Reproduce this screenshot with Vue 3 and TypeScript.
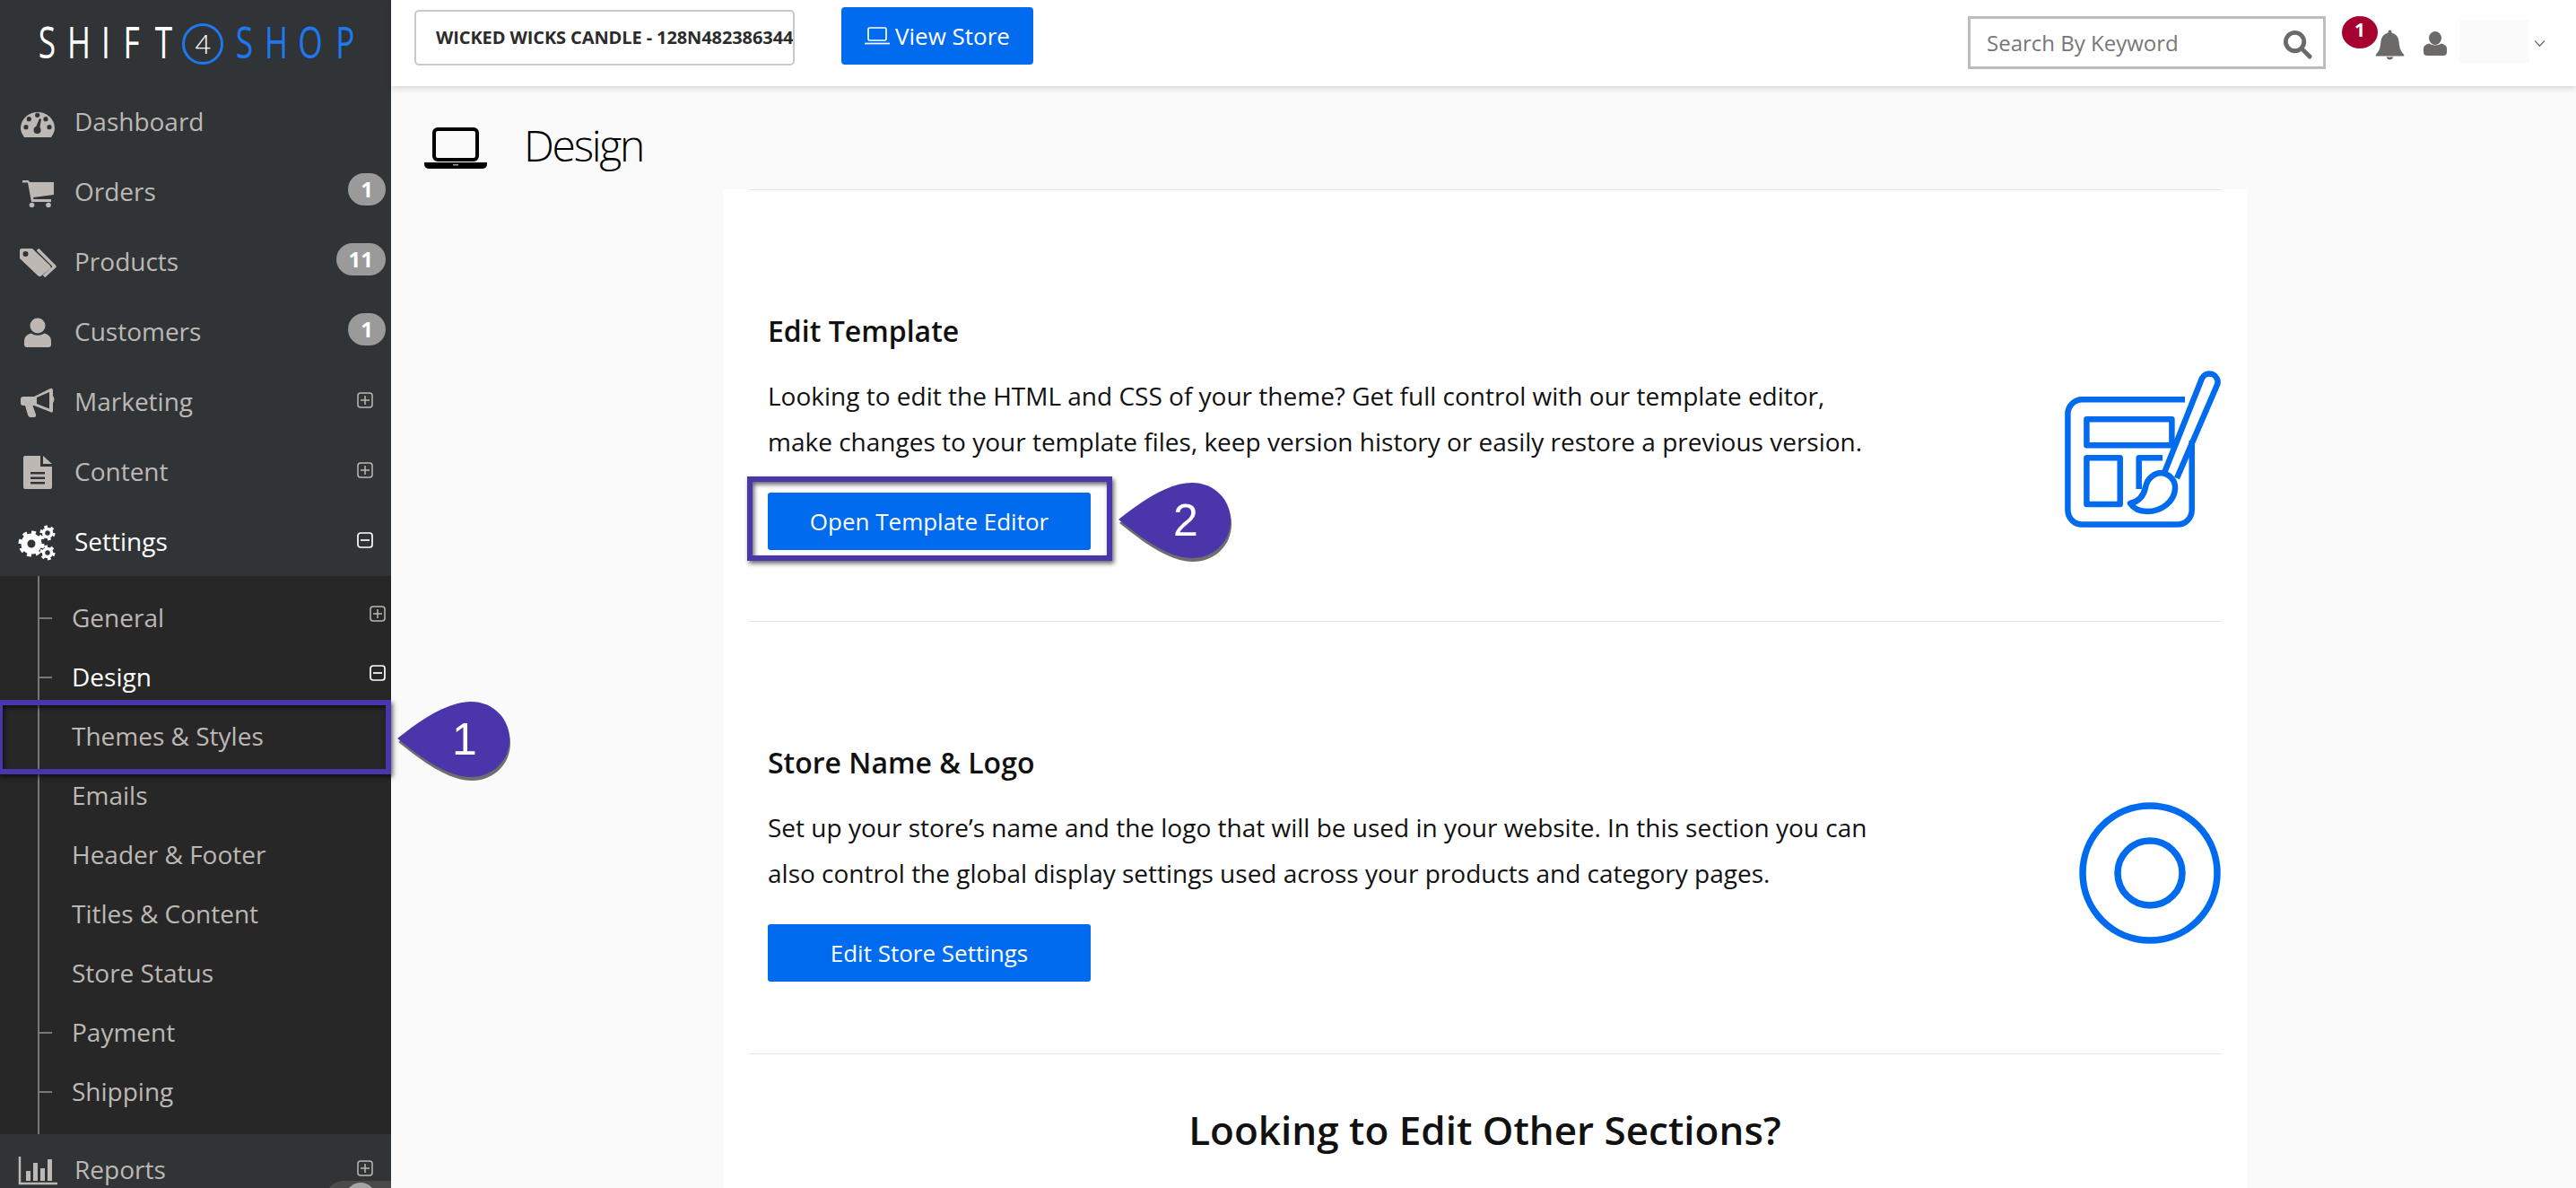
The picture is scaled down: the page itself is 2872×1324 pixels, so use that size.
<script setup lang="ts">
interface NavItem {
  label: string
  icon: string
  badge?: string
  toggle?: 'plus' | 'minus'
  active?: boolean
}
interface SubItem {
  label: string
  tick?: boolean
  toggle?: 'plus' | 'minus'
  active?: boolean
}
const topNav: NavItem[] = [
  { label: 'Dashboard', icon: 'gauge' },
  { label: 'Orders', icon: 'cart', badge: '1' },
  { label: 'Products', icon: 'tags', badge: '11' },
  { label: 'Customers', icon: 'user', badge: '1' },
  { label: 'Marketing', icon: 'horn', toggle: 'plus' },
  { label: 'Content', icon: 'file', toggle: 'plus' },
  { label: 'Settings', icon: 'gears', toggle: 'minus', active: true }
]
const subNav: SubItem[] = [
  { label: 'General', tick: true, toggle: 'plus' },
  { label: 'Design', tick: true, toggle: 'minus', active: true },
  { label: 'Themes & Styles' },
  { label: 'Emails' },
  { label: 'Header & Footer' },
  { label: 'Titles & Content' },
  { label: 'Store Status' },
  { label: 'Payment', tick: true },
  { label: 'Shipping', tick: true }
]
const bottomNav: NavItem[] = [{ label: 'Reports', icon: 'chart', toggle: 'plus' }]
const gearDots = [0, 1]
</script>

<template>
  <div class="page">
    <aside class="sidebar">
      <div class="brand">
        <span class="bl w35"><i>S</i></span>
        <span class="bl w36"><i>H</i></span>
        <span class="bl w24"><i>I</i></span>
        <span class="bl w34"><i>F</i></span>
        <span class="bl w36"><i>T</i></span>
        <span class="brand-four">4</span>
        <span class="bl blue w35 gap6"><i>S</i></span>
        <span class="bl blue w35"><i>H</i></span>
        <span class="bl blue w43"><i>O</i></span>
        <span class="bl blue w34"><i>P</i></span>
      </div>
      <nav>
        <div v-for="item in topNav" :key="item.label" class="nav-row" :class="{ active: item.active }">
          <svg class="nav-icon" viewBox="0 0 44 40" aria-hidden="true">
            <template v-if="item.icon === 'gauge'">
              <path d="M7 38C4.500 34 3 31 3 28A19 18 0 0 1 41 28C41 31 39.500 34 37 38Z" />
              <g class="cut">
                <circle cx="9" cy="26.700" r="2.600" /><circle cx="12.300" cy="17.700" r="2.600" /><circle cx="21.700" cy="13.300" r="2.600" /><circle cx="31" cy="17.700" r="2.600" /><circle cx="35" cy="26.700" r="2.600" /><circle cx="21.500" cy="30" r="4" /><path d="M24 17L26 18L24 29L19 29Z" />
              </g>
            </template>
            <template v-else-if="item.icon === 'cart'">
              <path d="M5 8H11Q12.500 8 13 10H40V24L17 27L17.500 29H37V32H15L11 10.500H5Z" />
              <circle cx="15.500" cy="35.500" r="2.800" /><circle cx="34" cy="35.500" r="2.800" />
            </template>
            <template v-else-if="item.icon === 'tags'">
              <path fill-rule="evenodd" d="M4 6H16L36 25Q37.500 27 36 28.500L26 36.500Q24 38 22 36L2 17V8Q2 6 4 6ZM8.500 9A3 3 0 1 0 8.500 15A3 3 0 1 0 8.500 9Z" />
              <path class="line" d="M22 7L41 26L29 37" />
            </template>
            <template v-else-if="item.icon === 'user'">
              <ellipse cx="22" cy="14" rx="8.500" ry="8.500" />
              <path d="M7 35V31Q7 24.500 14.500 22.500Q22 27 29.500 22.500Q37 24.500 37 31V35Q37 38 34 38H10Q7 38 7 35Z" />
            </template>
            <template v-else-if="item.icon === 'horn'">
              <path fill-rule="evenodd" d="M3 18Q3 15 6 15H18L36 6Q39 5 39 9V14Q42 18 39 22V31Q38.500 34 36 32L18 25H16.500L20 35Q20.500 38 18 38H14Q12 38 11 35.500L8 25H6Q3 25 3 22ZM21 16V23L35 28.500V10Z" />
            </template>
            <template v-else-if="item.icon === 'file'">
              <path d="M8 3H25V15H38V38Q38 40 36 40H8Q6 40 6 38V5Q6 3 8 3Z" />
              <path d="M28 3L38 12H28Z" />
              <rect class="cut" x="14" y="21" width="16" height="2.500" /><rect class="cut" x="14" y="26.500" width="16" height="2.500" /><rect class="cut" x="14" y="32" width="16" height="2.500" />
            </template>
            <template v-else-if="item.icon === 'gears'">
              <circle class="ring" cx="15" cy="23" r="8" stroke-width="7" />
              <circle class="ring" cx="15" cy="23" r="12" stroke-width="5" pathLength="16" stroke-dasharray="1 1" />
              <g v-for="n in gearDots" :key="n">
                <circle class="ring" cx="33" :cy="n === 0 ? 11 : 33" r="4.500" stroke-width="3.500" />
                <circle class="ring" cx="33" :cy="n === 0 ? 11 : 33" r="7" stroke-width="3" pathLength="12" stroke-dasharray="1 1" />
              </g>
            </template>
          </svg>
          <span class="nav-label">{{ item.label }}</span>
          <span v-if="item.badge" class="badge">{{ item.badge }}</span>
          <svg v-if="item.toggle" class="toggle" viewBox="0 0 18 18" aria-hidden="true">
            <rect x="1" y="1" width="16" height="16" rx="3" />
            <path :d="item.toggle === 'plus' ? 'M4 9H14M9 4V14' : 'M4 9H14'" />
          </svg>
        </div>
      </nav>
      <ul class="subnav">
        <li v-for="sub in subNav" :key="sub.label" class="sub-row" :class="{ active: sub.active, tick: sub.tick }">
          <span>{{ sub.label }}</span>
          <svg v-if="sub.toggle" class="toggle sub-toggle" viewBox="0 0 18 18" aria-hidden="true">
            <rect x="1" y="1" width="16" height="16" rx="3" />
            <path :d="sub.toggle === 'plus' ? 'M4 9H14M9 4V14' : 'M4 9H14'" />
          </svg>
        </li>
      </ul>
      <div v-for="item in bottomNav" :key="item.label" class="nav-row">
        <svg class="nav-icon" viewBox="0 0 44 40" aria-hidden="true">
          <path class="line thin" d="M2 6V36H44" />
          <rect x="9" y="22" width="5" height="11" /><rect x="17" y="13" width="5" height="20" /><rect x="25" y="19" width="5" height="14" /><rect x="33" y="9" width="5" height="24" />
        </svg>
        <span class="nav-label">{{ item.label }}</span>
        <svg class="toggle" viewBox="0 0 18 18" aria-hidden="true">
          <rect x="1" y="1" width="16" height="16" rx="3" />
          <path d="M4 9H14M9 4V14" />
        </svg>
      </div>
      <div class="help-tab"><span class="help-dot"></span></div>
    </aside>

    <main class="main">
      <header class="topbar">
        <div class="store-select">WICKED WICKS CANDLE - 128N482386344</div>
        <button class="view-store" type="button">
          <svg class="vs-icon" viewBox="0 0 28 20" aria-hidden="true">
            <rect x="4" y="1" width="20" height="14" rx="1.500" />
            <path d="M0 18.500H28" />
          </svg>
          View Store
        </button>
        <div class="search">
          <span>Search By Keyword</span>
          <svg class="search-icon" viewBox="0 0 34 34" aria-hidden="true">
            <circle cx="14" cy="14" r="10.500" />
            <path d="M22 22L31 31" />
          </svg>
        </div>
        <div class="bell">
          <svg viewBox="0 0 34 34" aria-hidden="true">
            <path d="M17 0Q19 0 19 3Q27 5 27.500 14C28 22 30 25 33 28Q34 30 32 30H2Q0 30 1 28C4 25 6 22 6.500 14Q7 5 15 3Q15 0 17 0Z" />
            <path d="M13 31H21Q20 34 17 34Q14 34 13 31Z" />
          </svg>
          <span class="bell-badge">1</span>
        </div>
        <svg class="top-user" viewBox="0 0 26 27" aria-hidden="true">
          <ellipse cx="13" cy="7.500" rx="7" ry="7.500" />
          <path d="M0 23V19Q0 15 6 13.500Q13 17.500 20 13.500Q26 15 26 19V23Q26 27 22 27H4Q0 27 0 23Z" />
        </svg>
        <div class="account-blank"></div>
        <svg class="chev" viewBox="0 0 14 10" aria-hidden="true"><path d="M1 1.500L7 8L13 1.500" /></svg>
      </header>

      <div class="title-row">
        <svg class="title-icon" viewBox="0 0 70 46" aria-hidden="true">
          <rect x="11" y="2" width="48" height="34" rx="4" />
          <path class="base" d="M0 39H70V41Q70 46 64 46H6Q0 46 0 41Z" />
          <rect class="slot" x="32" y="41" width="6" height="1.500" />
        </svg>
        <h1>Design</h1>
      </div>

      <section class="panel">
        <div class="block">
          <div class="block-text">
            <h3>Edit Template</h3>
            <p>Looking to edit the HTML and CSS of your theme? Get full control with our template editor, make changes to your template files, keep version history or easily restore a previous version.</p>
            <button class="primary" type="button">Open Template Editor</button>
          </div>
          <svg class="tpl-icon" viewBox="0 0 174 174" aria-hidden="true">
            <path d="M134 32.300H19.400A16 16 0 0 0 3.400 48.300V155.600A16 16 0 0 0 19.400 171.600H125.700A16 16 0 0 0 141.700 155.600V78" />
            <rect x="24.400" y="54.300" width="95" height="29" />
            <rect x="24.400" y="97.300" width="37.300" height="51.700" />
            <path d="M82.700 132V97.300H109" />
            <path d="M111 114L153 8.500A9.300 9.300 0 0 1 170.300 15L125 120" />
            <path d="M73 148C82 146 88 140 90 130C92 120 100 114 108 114C116 115 124 122 123 132C122 146 108 157 92 157C84 157 77 154 73 148Z" />
          </svg>
        </div>
        <div class="block block-store">
          <div class="block-text">
            <h3>Store Name &amp; Logo</h3>
            <p>Set up your store’s name and the logo that will be used in your website. In this section you can also control the global display settings used across your products and category pages.</p>
            <button class="primary" type="button">Edit Store Settings</button>
          </div>
          <svg class="logo-icon" viewBox="0 0 158 158" aria-hidden="true">
            <circle cx="79" cy="79" r="75" />
            <circle cx="79" cy="79" r="36" />
          </svg>
        </div>
        <h2>Looking to Edit Other Sections?</h2>
      </section>
    </main>

    <div class="hl hl-one"></div>
    <div class="hl hl-two"></div>
    <div class="callout callout-one">
      <svg viewBox="0 0 125 90" aria-hidden="true">
        <path class="drop-shadow" d="M0 42C25 22 55 1 82 1C107 1 125 20 125 43C125 67 106 85 82 85C55 85 25 62 0 42Z" />
        <path class="drop" d="M0 42C25 22 55 1 82 1C107 1 125 20 125 43C125 67 106 85 82 85C55 85 25 62 0 42Z" />
      </svg>
      <span>1</span>
    </div>
    <div class="callout callout-two">
      <svg viewBox="0 0 125 90" aria-hidden="true">
        <path class="drop-shadow" d="M0 42C25 22 55 1 82 1C107 1 125 20 125 43C125 67 106 85 82 85C55 85 25 62 0 42Z" />
        <path class="drop" d="M0 42C25 22 55 1 82 1C107 1 125 20 125 43C125 67 106 85 82 85C55 85 25 62 0 42Z" />
      </svg>
      <span>2</span>
    </div>
  </div>
</template>

<style>
html, body { margin: 0; background: #fafafa; }
</style>

<style scoped>
.page {
  position: relative;
  display: flex;
  height: 100vh;
  min-height: 1324px;
  overflow: hidden;
  background: #fafafa;
  font-family: "Open Sans", "Liberation Sans", sans-serif;
  color: #111;
}
.sidebar {
  position: relative;
  flex: 0 0 436px;
  background: #303436;
  overflow: hidden;
}
.brand {
  height: 96px;
  display: flex;
  align-items: center;
  padding-left: 35px;
  box-sizing: border-box;
  font-weight: 400;
  font-size: 49px;
  line-height: 1;
  color: #fff;
}
.bl { flex: none; display: block; text-align: center; margin-top: -3px; }
.bl i { display: inline-block; font-style: normal; transform: scaleX(.72); }
.bl.blue { color: #1e78f0; }
.w24 { width: 24px; }
.w34 { width: 34px; }
.w35 { width: 35px; }
.w36 { width: 36px; }
.w43 { width: 43px; }
.gap6 { margin-left: 6px; }
.brand-four {
  flex: none;
  width: 46px;
  height: 46px;
  margin: 2px 0 0 3px;
  box-sizing: border-box;
  border: 3px solid #1e78f0;
  border-radius: 50%;
  color: #fff;
  font-size: 30px;
  font-weight: 300;
  display: flex;
  align-items: center;
  justify-content: center;
}
.nav-row {
  position: relative;
  height: 78px;
  display: flex;
  align-items: center;
  padding-left: 20px;
  color: #bdb8b4;
  fill: #bdb8b4;
  font-size: 28px;
}
.nav-row.active { color: #fff; fill: #fff; }
.nav-icon { width: 44px; height: 40px; flex: none; overflow: visible; }
.nav-icon .cut { fill: #303436; }
.nav-icon .line { fill: none; stroke: #bdb8b4; stroke-width: 3.5; stroke-linejoin: round; }
.nav-icon .line.thin { stroke-width: 2.500; stroke-linejoin: miter; }
.nav-icon .ring { fill: none; stroke: #fff; }
.nav-label { margin-left: 19px; line-height: 40px; margin-top: -1px; }
.badge {
  position: absolute;
  right: 6px;
  top: 19px;
  height: 36px;
  padding: 0 14px;
  box-sizing: border-box;
  border-radius: 18px;
  background: #9a9a9a;
  color: #fff;
  font-size: 24px;
  font-weight: 700;
  line-height: 36px;
  text-align: center;
}
.toggle {
  position: absolute;
  left: 398px;
  top: 29px;
  width: 18px;
  height: 18px;
  fill: none;
  stroke: #bdb8b4;
  stroke-width: 1.500;
}
.nav-row.active .toggle { stroke: #fff; stroke-width: 1.700; }
.subnav {
  position: relative;
  list-style: none;
  margin: 0;
  padding: 14px 0;
  background: #272727;
}
.subnav::before {
  content: "";
  position: absolute;
  left: 42px;
  top: 0;
  bottom: 0;
  width: 2px;
  background: #787878;
}
.sub-row {
  position: relative;
  height: 66px;
  line-height: 65px;
  padding-left: 80px;
  color: #bdb8b4;
  font-size: 28px;
}
.sub-row.active { color: #fff; }
.sub-row.tick::before {
  content: "";
  position: absolute;
  left: 43px;
  top: 32px;
  width: 15px;
  height: 2px;
  background: #787878;
}
.sub-toggle { left: 412px; top: 19px; }
.sub-row.active .sub-toggle { stroke: #fff; stroke-width: 1.700; }
.help-tab {
  position: absolute;
  left: 363px;
  top: 1316px;
  width: 73px;
  height: 40px;
  background: #4a4a4a;
  border-top-left-radius: 20px;
}
.help-dot {
  position: absolute;
  left: 22px;
  top: 2px;
  width: 34px;
  height: 34px;
  border-radius: 50%;
  background: #a5a5a5;
}
.main { flex: 1; min-width: 0; }
.topbar {
  position: relative;
  height: 96px;
  background: #fff;
  box-shadow: 0 2px 7px rgba(0, 0, 0, .16);
  display: flex;
  align-items: flex-start;
  padding-right: 34px;
}
.store-select {
  flex: none;
  width: 424px;
  height: 62px;
  margin: 11px 0 0 26px;
  padding-left: 22px;
  box-sizing: border-box;
  border: 2px solid #c9c9c9;
  border-radius: 5px;
  font-size: 20px;
  font-weight: 700;
  line-height: 58px;
  letter-spacing: -.1px;
  color: #2b2b2b;
  white-space: nowrap;
  overflow: hidden;
}
.view-store {
  flex: none;
  width: 214px;
  height: 64px;
  margin: 8px 0 0 52px;
  border: 0;
  border-radius: 4px;
  background: #006bee;
  color: #fff;
  font: 400 26px "Open Sans", sans-serif;
  display: flex;
  align-items: center;
  justify-content: center;
  gap: 6px;
  padding: 0;
}
.vs-icon { width: 28px; height: 20px; fill: none; stroke: #fff; stroke-width: 1.700; }
.search {
  position: relative;
  flex: none;
  width: 399px;
  height: 59px;
  margin: 18px 0 0 auto;
  box-sizing: border-box;
  border: 3px solid #bdbdbd;
  padding-left: 18px;
  color: #777;
  font-size: 24px;
  line-height: 53px;
}
.search-icon {
  position: absolute;
  right: 12px;
  top: 12px;
  width: 33px;
  height: 33px;
  fill: none;
  stroke: #6b6a68;
  stroke-width: 5;
  stroke-linecap: round;
}
.bell { position: relative; flex: none; width: 33px; height: 34px; margin: 33px 0 0 55px; fill: #6b6a68; }
.bell svg { display: block; width: 33px; height: 34px; }
.bell-badge {
  position: absolute;
  left: -37px;
  top: -15px;
  width: 40px;
  height: 36px;
  border-radius: 50%;
  background: #a6022f;
  color: #fff;
  font-size: 21px;
  font-weight: 700;
  line-height: 30px;
  text-align: center;
}
.top-user { flex: none; width: 26px; height: 27px; margin: 35px 0 0 21px; fill: #6b6a68; }
.account-blank { flex: none; width: 78px; height: 48px; margin: 22px 0 0 14px; background: #fafafa; }
.chev { flex: none; width: 13px; height: 9px; margin: 44px 0 0 5px; fill: none; stroke: #6b6a68; stroke-width: 1.500; }
.title-row {
  height: 115px;
  display: flex;
  align-items: flex-start;
  padding-left: 37px;
}
.title-icon { width: 70px; height: 46px; margin-top: 46px; fill: none; stroke: #000; stroke-width: 4; }
.title-icon .base { fill: #000; stroke: none; }
.title-icon .slot { fill: #999; stroke: none; }
h1 {
  margin: 33px 0 0 41px;
  font-size: 48px;
  font-weight: 300;
  line-height: 66px;
  letter-spacing: -2.300px;
  color: #000;
}
.panel {
  width: 1699px;
  margin-left: 370px;
  height: 1113px;
  padding: 0 28px;
  box-sizing: border-box;
  background: #fff;
  text-align: left;
}
.block {
  display: flex;
  justify-content: space-between;
  align-items: flex-start;
  height: 481px;
  box-sizing: border-box;
  padding: 135px 0 0 22px;
  border-top: 1px solid #e6e6e6;
}
.block-store { height: 482px; }
.block-text { width: 1232px; }
h3 {
  margin: 0;
  font-size: 32px;
  font-weight: 600;
  line-height: 44px;
  color: #111;
}
p {
  margin: 25px 0 31px;
  font-size: 28px;
  line-height: 51px;
  color: #111;
}
.primary {
  display: block;
  width: 360px;
  height: 64px;
  border: 0;
  border-radius: 3px;
  background: #006bee;
  color: #fff;
  font: 400 26px "Open Sans", sans-serif;
  padding: 0;
}
.tpl-icon {
  flex: none;
  width: 174px;
  height: 174px;
  margin-top: 66px;
  margin-right: 1px;
  fill: #fff;
  stroke: #006bee;
  stroke-width: 6.500;
  stroke-linejoin: round;
  overflow: visible;
}
.tpl-icon path:not(:last-child) { fill: none; }
.tpl-icon rect { fill: none; }
.logo-icon {
  flex: none;
  width: 158px;
  height: 158px;
  margin-top: 66px;
  margin-right: 1px;
  fill: none;
  stroke: #006bee;
  stroke-width: 7.500;
}
h2 {
  margin: 0;
  padding-top: 54px;
  border-top: 1px solid #e6e6e6;
  font-size: 44px;
  font-weight: 600;
  line-height: 60px;
  text-align: center;
  color: #111;
}
.hl {
  position: absolute;
  box-sizing: border-box;
  border: 6px solid #4b35ab;
  box-shadow: 2px 3px 5px rgba(0, 0, 0, .6), inset 2px 3px 5px rgba(0, 0, 0, .6);
  pointer-events: none;
}
.hl-one { left: -3px; top: 780px; width: 439px; height: 83px; }
.hl-two { left: 833px; top: 531px; width: 407px; height: 94px; }
.callout { position: absolute; width: 125px; height: 90px; }
.callout svg { position: absolute; inset: 0; width: 125px; height: 90px; overflow: visible; }
.callout span {
  position: absolute;
  left: 45px;
  width: 60px;
  top: 1px;
  text-align: center;
  color: #fff;
  font: 400 50px/84px "Liberation Sans", sans-serif;
}
.drop { fill: #4b35ab; }
.drop-shadow { fill: #6e6e6e; transform: translate(1px, 4px); }
.callout-one { left: 443px; top: 781px; }
.callout-two { left: 1247px; top: 537px; }
</style>
